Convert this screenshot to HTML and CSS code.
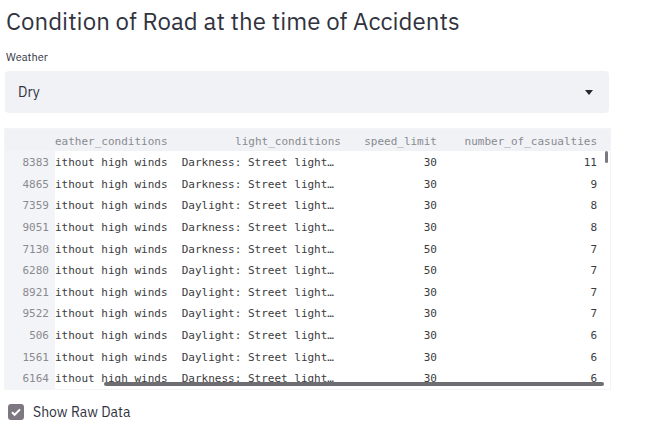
FILE: index.html
```html
<!DOCTYPE html>
<html>
<head>
<meta charset="utf-8">
<link rel="stylesheet" href="styles.css">
</head>
<body>
<div class="page">
  <h1 class="title">Condition of Road at the time of Accidents</h1>
  <div class="label">Weather</div>
  <div class="select">
    <span class="select-value">Dry</span>
    <svg class="caret" width="8" height="5" viewBox="0 0 8 5"><path d="M0 0h8L4 5z" fill="#262730"/></svg>
  </div>
  <div class="table">
    <div class="row head">
      <div class="c idx"></div>
      <div class="c w">eather_conditions</div>
      <div class="c l">light_conditions</div>
      <div class="c s">speed_limit</div>
      <div class="c n">number_of_casualties</div>
    </div>
    <div class="body">
      <div class="row"><div class="c idx">8383</div><div class="c w">ithout high winds</div><div class="c l">Darkness: Street light…</div><div class="c s">30</div><div class="c n">11</div></div>
      <div class="row"><div class="c idx">4865</div><div class="c w">ithout high winds</div><div class="c l">Darkness: Street light…</div><div class="c s">30</div><div class="c n">9</div></div>
      <div class="row"><div class="c idx">7359</div><div class="c w">ithout high winds</div><div class="c l">Daylight: Street light…</div><div class="c s">30</div><div class="c n">8</div></div>
      <div class="row"><div class="c idx">9051</div><div class="c w">ithout high winds</div><div class="c l">Darkness: Street light…</div><div class="c s">30</div><div class="c n">8</div></div>
      <div class="row"><div class="c idx">7130</div><div class="c w">ithout high winds</div><div class="c l">Darkness: Street light…</div><div class="c s">50</div><div class="c n">7</div></div>
      <div class="row"><div class="c idx">6280</div><div class="c w">ithout high winds</div><div class="c l">Daylight: Street light…</div><div class="c s">50</div><div class="c n">7</div></div>
      <div class="row"><div class="c idx">8921</div><div class="c w">ithout high winds</div><div class="c l">Daylight: Street light…</div><div class="c s">30</div><div class="c n">7</div></div>
      <div class="row"><div class="c idx">9522</div><div class="c w">ithout high winds</div><div class="c l">Daylight: Street light…</div><div class="c s">30</div><div class="c n">7</div></div>
      <div class="row"><div class="c idx">506</div><div class="c w">ithout high winds</div><div class="c l">Daylight: Street light…</div><div class="c s">30</div><div class="c n">6</div></div>
      <div class="row"><div class="c idx">1561</div><div class="c w">ithout high winds</div><div class="c l">Daylight: Street light…</div><div class="c s">30</div><div class="c n">6</div></div>
      <div class="row"><div class="c idx">6164</div><div class="c w">ithout high winds</div><div class="c l">Darkness: Street light…</div><div class="c s">30</div><div class="c n">6</div></div>
      <div class="vscroll"></div>
      <div class="hscroll"></div>
    </div>
  </div>
  <label class="check">
    <span class="box"><svg width="16" height="16" viewBox="0 0 16 16"><path d="M4 8.2l2.6 2.6L12 5.4" fill="none" stroke="#fff" stroke-width="2"/></svg></span>
    <span class="check-text">Show Raw Data</span>
  </label>
</div>
</body>
</html>
```

FILE: styles.css
```css
html, body { margin: 0; padding: 0; background: #fff; }
.page { padding: 0 50px 0 5px; font-family: "IBM Plex Sans", "Noto Sans", sans-serif; color: #262730; }
.title { margin: 0; padding: 6px 0 0 1px; font-weight: 400; font-size: 24px; line-height: 30px; height: 38px; color: #31333f; letter-spacing: 0.05px; }
.label { font-size: 11px; line-height: 14px; color: #31333f; padding: 6px 0 0 1px; height: 21px; }
.select { height: 42px; background: #f0f2f6; border-radius: 4px; display: flex; align-items: center; justify-content: space-between; padding: 0 16px 0 13px; box-sizing: border-box; width: 604px; }
.select-value { font-size: 14px; color: #31333f; }
.caret { margin-top: 1px; }
.table { margin-top: 16px; width: 605px; font-family: "DejaVu Sans Mono", "Liberation Mono", monospace; font-size: 11px; color: #3c3c40; box-shadow: 0 0 0 1px #f4f4f6; }
.row { display: flex; height: 21.6px; align-items: center; white-space: pre; }
.head { background: #f0f2f6; height: 22px; color: #8a8a90; }
.body { position: relative; background: linear-gradient(to right, #f3f4f7 50px, transparent 50px); }
.c { flex: none; padding-top: 2px; }
.idx { width: 44px; text-align: right; padding-right: 6px; color: #8a8a90; }
.w { width: 126px; }
.l { width: 153px; text-align: right; }
.head .l { width: 160px; }
.s { width: 103px; text-align: right; }
.head .s { width: 96px; }
.n { width: 160px; text-align: right; }
.vscroll { position: absolute; right: 2px; top: 0; width: 3px; height: 12px; background: #7a7a80; border-radius: 2px; }
.hscroll { position: absolute; left: 99px; top: 231px; width: 500px; height: 4px; background: #6e6e72; border-radius: 2px; }
.check { display: flex; align-items: center; margin-top: 14px; height: 18px; padding-left: 3px; }
.box { width: 16px; height: 16px; border-radius: 3px; background: #7d787f; display: block; }
.box svg { display: block; }
.check-text { font-size: 14px; margin-left: 9px; color: #31333f; }
```
